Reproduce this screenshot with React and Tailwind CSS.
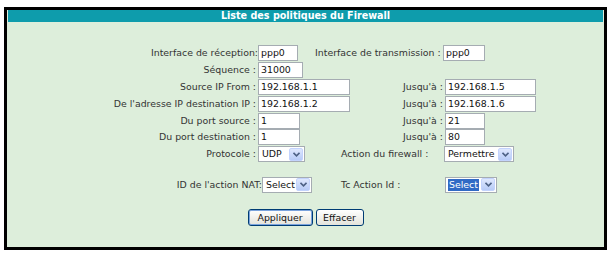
import React from 'react';

const TextBox = ({ value, w }) => (
    <div className={`h-[16px] ${w} shrink-0 bg-white border border-[#a5acb2] px-[2px] leading-[14px] text-[#111] overflow-hidden whitespace-nowrap`}>
        {value}
    </div>
);

const SelectBox = ({ value, w, focused }) => (
    <div className={`h-[16px] ${w} shrink-0 bg-white border border-[#a5acb2] flex items-center justify-between pl-[2px] pr-[1px]`}>
        <span className={`leading-[12px] px-[1px] ${focused ? 'bg-[#316ac5] text-white' : 'text-[#111]'}`}>{value}</span>
        <span className="h-[13px] w-[14px] rounded-[2px] bg-gradient-to-b from-[#dfe8fd] to-[#b7cbf7] border border-[#c3d3fd] flex items-center justify-center">
            <svg width="7" height="5" viewBox="0 0 7 5">
                <path d="M0.5 0.8 L3.5 3.8 L6.5 0.8" fill="none" stroke="#4d6185" strokeWidth="1.6" />
            </svg>
        </span>
    </div>
);

const Label = ({ children, w, right }) => (
    <div className={`${w} shrink-0 whitespace-nowrap ${right ? 'text-right' : ''}`}>{children}</div>
);

const Row = ({ children }) => (
    <div className="flex items-center h-[16.8px]">{children}</div>
);

const XpButton = ({ children, w, primary }) => (
    <button className={`h-[17px] ${w} rounded-[3px] border ${primary ? 'border-[#003c74] shadow-[inset_0_0_0_1px_#7aa3dd]' : 'border-[#003c74]'} bg-gradient-to-b from-white to-[#e3e3db] text-[#111] leading-[14px]`}>
        {children}
    </button>
);

export default function App() {
    return (
        <div className="w-[610px] h-[254px] bg-white pt-[7px] pl-[4px]" style={{ fontFamily: '"DejaVu Sans", Verdana, sans-serif' }}>
            <div className="w-[603px] h-[243px] border-[3px] border-black bg-[#ddeedb] px-[1px] text-[9.4px] text-[#333]">
                <div className="h-[12px] bg-[#0e9cac] text-white font-bold text-[9.6px] text-center leading-[12px]">
                    Liste des politiques du Firewall
                </div>

                <div className="mt-[23px] -ml-[1px]">
                    <Row>
                        <Label w="w-[251px]" right>Interface de réception:</Label>
                        <TextBox value="ppp0" w="w-[40px]" />
                        <Label w="w-[145px] pl-[17px]">Interface de transmission :</Label>
                        <TextBox value="ppp0" w="w-[42px]" />
                    </Row>
                    <Row>
                        <Label w="w-[251px] pr-[2px]" right>Séquence :</Label>
                        <TextBox value="31000" w="w-[45px]" />
                    </Row>
                    <Row>
                        <Label w="w-[251px] pr-[2px]" right>Source IP From :</Label>
                        <TextBox value="192.168.1.1" w="w-[92px]" />
                        <Label w="w-[95px] pr-[2px]" right>Jusqu'à :</Label>
                        <TextBox value="192.168.1.5" w="w-[91px]" />
                    </Row>
                    <Row>
                        <Label w="w-[251px] pr-[2px]" right>De l'adresse IP destination IP :</Label>
                        <TextBox value="192.168.1.2" w="w-[92px]" />
                        <Label w="w-[95px] pr-[2px]" right>Jusqu'à :</Label>
                        <TextBox value="192.168.1.6" w="w-[91px]" />
                    </Row>
                    <Row>
                        <Label w="w-[251px] pr-[2px]" right>Du port source :</Label>
                        <TextBox value="1" w="w-[42px]" />
                        <Label w="w-[145px] pr-[2px]" right>Jusqu'à :</Label>
                        <TextBox value="21" w="w-[40px]" />
                    </Row>
                    <Row>
                        <Label w="w-[251px] pr-[2px]" right>Du port destination :</Label>
                        <TextBox value="1" w="w-[42px]" />
                        <Label w="w-[145px] pr-[2px]" right>Jusqu'à :</Label>
                        <TextBox value="80" w="w-[40px]" />
                    </Row>
                    <Row>
                        <Label w="w-[251px] pr-[2px]" right>Protocole :</Label>
                        <SelectBox value="UDP" w="w-[47px]" />
                        <Label w="w-[139px] pl-[36px]">Action du firewall :</Label>
                        <SelectBox value="Permettre" w="w-[70px]" />
                    </Row>

                    <div className="mt-[14px]">
                        <Row>
                            <Label w="w-[255px]" right>ID de l'action NAT:</Label>
                            <SelectBox value="Select" w="w-[50px]" />
                            <Label w="w-[133px] pl-[29px]">Tc Action Id :</Label>
                            <SelectBox value="Select" w="w-[52px]" focused />
                        </Row>
                    </div>

                    <div className="mt-[16px] flex justify-center gap-[3px] pl-[1px]">
                        <XpButton w="w-[65px]" primary>Appliquer</XpButton>
                        <XpButton w="w-[48px]">Effacer</XpButton>
                    </div>
                </div>
            </div>
        </div>
    );
}
